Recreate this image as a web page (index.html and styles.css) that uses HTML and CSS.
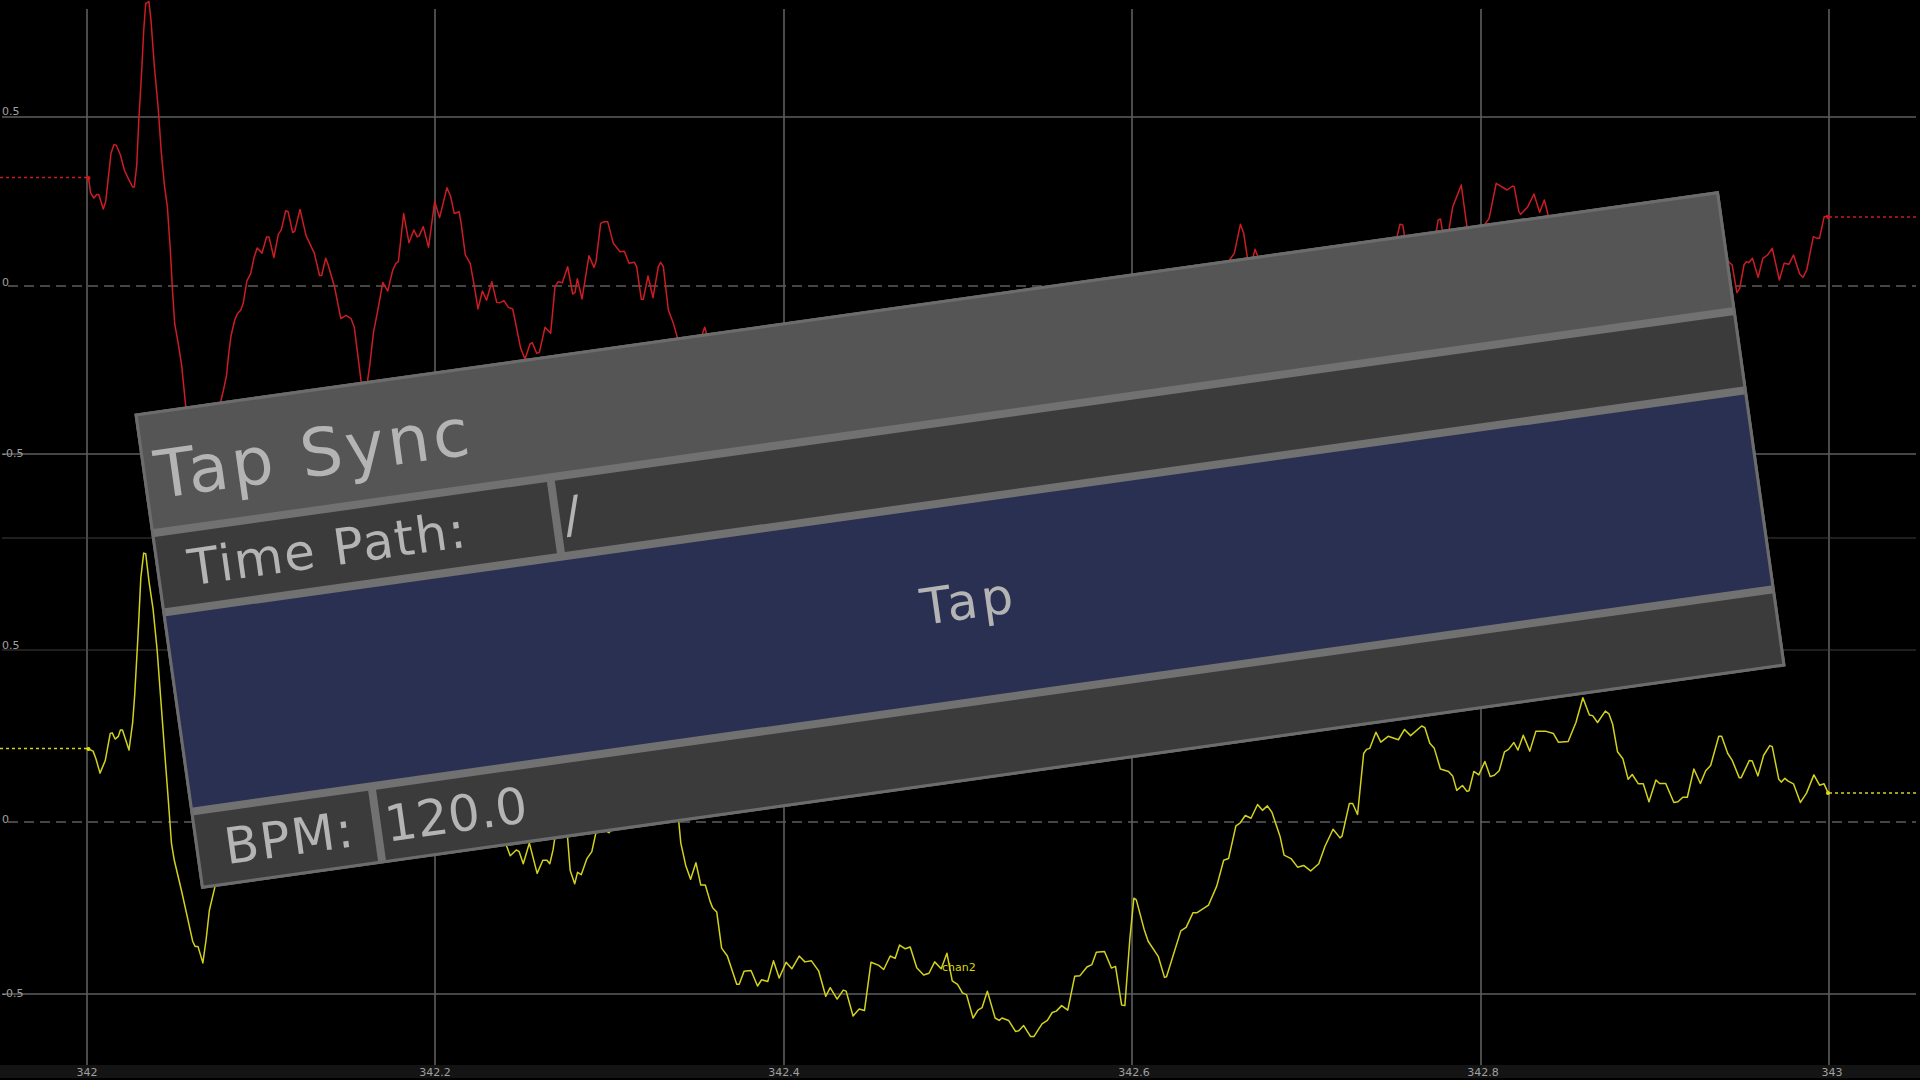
FILE: index.html
```html
<!DOCTYPE html>
<html>
<head>
	<title>Tap Sync</title>
	<link rel="stylesheet" href="styles.css">
</head>
<body>
	<div class="viewer">
		<svg class="graph" width="1920" height="1080" viewBox="0 0 1920 1080">
			<rect class="ruler" x="0" y="1065" width="1920" height="13"/>

			<!-- grid -->
			<g class="grid">
				<line x1="87" y1="9" x2="87" y2="1065"/>
				<line x1="435" y1="9" x2="435" y2="1065"/>
				<line x1="784" y1="9" x2="784" y2="1065"/>
				<line x1="1132" y1="9" x2="1132" y2="1065"/>
				<line x1="1481" y1="9" x2="1481" y2="1065"/>
				<line x1="1829" y1="9" x2="1829" y2="1065"/>
				<line x1="2" y1="117" x2="1916" y2="117"/>
				<line x1="2" y1="454" x2="1916" y2="454"/>
				<line x1="2" y1="994" x2="1916" y2="994"/>
				<line class="dim" x1="2" y1="538" x2="1916" y2="538"/>
				<line class="dim" x1="2" y1="650" x2="1916" y2="650"/>
				<line class="zero" x1="8" y1="286" x2="1916" y2="286"/>
				<line class="zero" x1="8" y1="822" x2="1916" y2="822"/>
			</g>

			<!-- channel 1 -->
			<g class="chan red">
				<line class="hold" x1="0" y1="177.5" x2="88" y2="177.5"/>
				<line class="hold" x1="1829" y1="217" x2="1916" y2="217"/>
				<circle cx="88.5" cy="178" r="2"/>
				<circle cx="1828" cy="217" r="2"/>
				<g transform="scale(.40816 .34439)">
					<polyline points="217,518 222,560 230,575 237,565 242,565 253,607 259,585 265,520 272,445 279,420 285,422 295,450 305,495 315,520 325,543 329,543 335,480 340,350 347,210 352,90 357,10 365,5 370,60 378,190 388,320 395,440 403,540 410,600 417,720 423,850 428,940 437,1000 445,1060 455,1180 500,1300 541,1165 548,1130 555,1090 560,1030 566,975 575,930 582,910 590,900 596,880 605,815 614,795 622,750 630,720 642,735 653,688 659,688 671,748 682,680 689,668 700,612 706,615 717,675 722,672 735,608 750,685 770,735 783,800 788,800 798,750 803,765 820,835 835,925 848,916 860,925 868,950 885,1110 892,1150 900,1110 906,1060 915,965 925,905 938,820 950,845 962,785 970,765 976,760 989,620 1002,705 1014,668 1022,688 1027,685 1037,658 1050,718 1065,585 1077,632 1095,545 1104,570 1113,620 1125,615 1130,650 1140,740 1152,765 1162,830 1171,897 1182,845 1192,872 1205,818 1217,878 1225,879"/>
				</g>
				<g transform="translate(500 210) scale(.33333)">
					<polyline points="0,278 12,272 25,292 38,297 50,355 62,415 75,447 90,402 97,398 110,430 118,427 135,352 152,370 165,230 175,215 187,218 203,170 218,252 225,248 232,206 246,267 267,137 282,172 288,155 302,40 312,35 323,35 340,100 360,125 373,124 387,160 403,157 410,170 424,268 430,268 444,198 459,263 475,170 482,157 490,170 505,300 520,340 532,382 536,410"/>
					<polyline points="603,395 607,372 614,352 620,372 623,395"/>
				</g>
				<g transform="translate(1180 150) scale(.47194 .33333)">
					<polyline points="95,345 105,330 115,310 128,223 135,250 143,325 147,345"/>
					<polyline points="150,345 155,320 159,298 165,320 170,345"/>
					<polyline points="455,290 460,260 466,223 472,225 476,260 480,290"/>
					<polyline points="538,270 543,245 547,210 552,207 556,243 560,270"/>
					<polyline points="565,260 570,238 578,170 596,105 608,230 610,260"/>
					<polyline points="640,240 645,225 655,205 670,100 693,120 705,108 708,110 718,185 722,193 737,170 750,132 762,187 772,150 780,195 784,225"/>
					<polyline points="1150,330 1162,335 1170,345 1180,428 1186,415 1195,345 1200,335 1205,338 1213,325 1225,382 1235,325 1245,315 1255,295 1270,390 1280,340 1290,343 1300,315 1313,372 1320,382 1328,360 1342,260 1350,265 1355,265 1365,200 1372,198"/>
				</g>
			</g>

			<!-- channel 2 -->
			<g class="chan yellow">
				<line class="hold" x1="0" y1="748.5" x2="88" y2="748.5"/>
				<line class="hold" x1="1829" y1="793" x2="1918" y2="793"/>
				<circle cx="88.5" cy="749" r="2"/>
				<circle cx="1828" cy="793" r="2"/>
				<g transform="translate(0 540) scale(.40816 .34439)">
					<polyline points="217,607 228,613 235,635 245,677 258,640 270,562 275,560 282,578 290,570 295,552 300,552 316,610 325,530 330,450 338,280 345,110 352,38 357,40 365,120 375,200 385,320 395,480 405,640 412,750 420,880 427,930 445,1020 460,1100 472,1165 478,1180 485,1180 497,1228 505,1160 513,1075 527,1005 540,940"/>
					<polyline points="1230,850 1240,885 1250,917 1265,900 1272,905 1282,940 1297,880 1316,968 1330,930 1340,930 1347,940 1355,900 1360,860 1365,830"/>
					<polyline points="1385,820 1390,855 1397,960 1408,998 1415,965 1424,972 1438,925 1450,905 1460,850 1465,820"/>
					<polyline points="1478,825 1485,845 1492,850 1497,843 1505,825"/>
				</g>
				<g transform="translate(640 540) scale(.40816 .34439)">
					<polyline points="90,790 95,818 100,880 112,945 124,985 137,937 149,1002 160,1002 172,1050 178,1068 188,1080 200,1185 214,1208 237,1290 243,1290 255,1252 272,1250 288,1295 298,1277 313,1282 327,1222 341,1272 358,1226 372,1245 390,1208 404,1225 420,1222 438,1252 455,1325 466,1300 483,1333 498,1307 505,1310 522,1382 537,1362 550,1366 566,1226 585,1235 597,1247 613,1208 625,1215 636,1176 650,1187 662,1182 678,1242 695,1263 708,1258 722,1225 738,1245 752,1200 765,1280 778,1290 790,1315 800,1320 816,1388 828,1365 838,1358 851,1310 870,1388 880,1395 887,1388 903,1395 920,1427 928,1425 940,1410 957,1442 965,1442 985,1405 998,1395 1010,1372 1020,1368 1033,1352 1048,1365 1065,1267 1078,1265 1095,1240 1107,1233 1118,1197 1138,1195 1155,1243 1165,1238 1180,1350 1188,1352 1200,1160 1210,1040 1216,1045 1235,1130 1245,1165 1270,1210 1285,1270 1290,1268 1325,1135 1338,1125 1355,1082 1365,1082 1393,1060 1413,1005 1430,930 1442,925 1460,830 1470,822 1483,800 1497,808 1513,768 1525,785 1537,772 1548,790 1568,860"/>
				</g>
				<g transform="translate(1280 540) scale(.40816 .34439)">
					<polyline points="0,860 10,915 27,925 43,950 58,945 75,961 95,940 110,890 130,840 147,865 152,860 170,765 178,765 190,797 205,620 212,608 220,605 235,558 247,587 265,570 290,580 305,550 320,568 347,540 355,545 367,590 378,605 393,665 413,672 423,685 433,727 447,713 458,730 463,728 475,672 487,682 502,643 515,687 525,683 537,670 550,615 560,608 573,588 583,610 596,567 612,613 627,555 650,555 670,562 682,587 706,585 725,530 742,458 758,508 766,510 778,530 797,497 806,505 815,535 827,615 840,635 853,695 863,681 878,708 890,708 904,760 921,697 930,707 945,707 965,762 975,760 987,747 998,747 1014,665 1030,707 1043,670 1055,655 1075,570 1082,570 1097,620 1108,640 1125,690 1130,690 1150,640 1157,642 1171,685 1185,625 1200,597 1206,600 1222,695 1228,703 1237,692 1245,700 1258,708 1275,762 1290,735 1308,682 1322,712 1333,708 1343,735"/>
				</g>
				<text class="chan-name" x="942" y="971">chan2</text>
			</g>

			<!-- value labels -->
			<g class="labels">
				<text x="2" y="115">0.5</text>
				<text x="2" y="286">0</text>
				<text x="2" y="457">-0.5</text>
				<text x="2" y="649">0.5</text>
				<text x="2" y="823">0</text>
				<text x="2" y="997">-0.5</text>
			</g>
			<g class="labels ticks">
				<text x="87" y="1076">342</text>
				<text x="435" y="1076">342.2</text>
				<text x="784" y="1076">342.4</text>
				<text x="1134" y="1076">342.6</text>
				<text x="1483" y="1076">342.8</text>
				<text x="1832" y="1076">343</text>
			</g>
		</svg>

		<div class="panel">
			<div class="title">Tap Sync</div>
			<div class="row path-row">
				<div class="label path-label">Time Path:</div>
				<div class="field">/</div>
			</div>
			<div class="tap">Tap</div>
			<div class="row bpm-row">
				<div class="label bpm-label">BPM:</div>
				<div class="field">120.0</div>
			</div>
		</div>
	</div>
</body>
</html>
```

FILE: styles.css
```css
html, body {
	height: 100%;
	margin: 0px;
	padding: 0px;
	background-color: black;
	overflow: hidden;
}
* {
	box-sizing: border-box;
}
.viewer {
	position: relative;
	width: 1920px;
	height: 1080px;
}
.graph {
	position: absolute;
	top: 0px;
	left: 0px;
	display: block;
}
.ruler {
	fill: #141414;
}
.grid line {
	stroke: #5e5e5e;
	stroke-width: 1.6;
}
.grid .dim {
	stroke: #3e3e3e;
	stroke-width: 1.2;
}
.grid .zero {
	stroke: #5e5e5e;
	stroke-dasharray: 10 6;
}
.chan polyline {
	fill: none;
	stroke-width: 1.5;
	stroke-linejoin: round;
	vector-effect: non-scaling-stroke;
}
.chan .hold {
	stroke-width: 1.6;
	stroke-dasharray: 3 3;
}
.red polyline, .red .hold {
	stroke: #cc1d24;
}
.red circle {
	fill: #e01010;
}
.yellow polyline, .yellow .hold {
	stroke: #d2d21e;
}
.yellow circle {
	fill: #e6e600;
}
.chan-name {
	fill: #d8d800;
	font-family: "DejaVu Sans", sans-serif;
	font-size: 11px;
}
.labels text {
	fill: #a0a0a0;
	font-family: "DejaVu Sans", sans-serif;
	font-size: 11px;
}
.ticks text {
	text-anchor: middle;
}

/* floating tool window */
.panel {
	position: absolute;
	top: 300px;
	left: 160px;
	width: 1600px;
	height: 480px;
	display: flex;
	flex-direction: column;
	gap: 8px;
	background-color: #717171;
	border: 3px solid #6c6c6c;
	transform: rotate(-8deg);
	color: #b4b4b4;
	font-family: "DejaVu Sans", sans-serif;
	font-size: 50px;
}
.title {
	height: 114px;
	padding: 22px 0px 0px 9px;
	background-color: #555555;
	font-size: 66px;
	line-height: 80px;
	letter-spacing: 3.5px;
}
.row {
	display: flex;
	gap: 8px;
}
.path-row {
	height: 72px;
}
.bpm-row {
	height: 71px;
}
.label, .field {
	display: flex;
	align-items: center;
	height: 100%;
	background-color: #3b3b3b;
}
.label {
	padding-left: 29px;
	letter-spacing: 1.6px;
}
.bpm-label {
	width: 176px;
	padding-left: 26px;
}
.path-label {
	width: 396px;
}
.field {
	flex: 1;
	padding-left: 4px;
}
.tap {
	height: 193px;
	display: flex;
	align-items: center;
	justify-content: center;
	background-color: #293051;
	letter-spacing: 4px;
}
```
